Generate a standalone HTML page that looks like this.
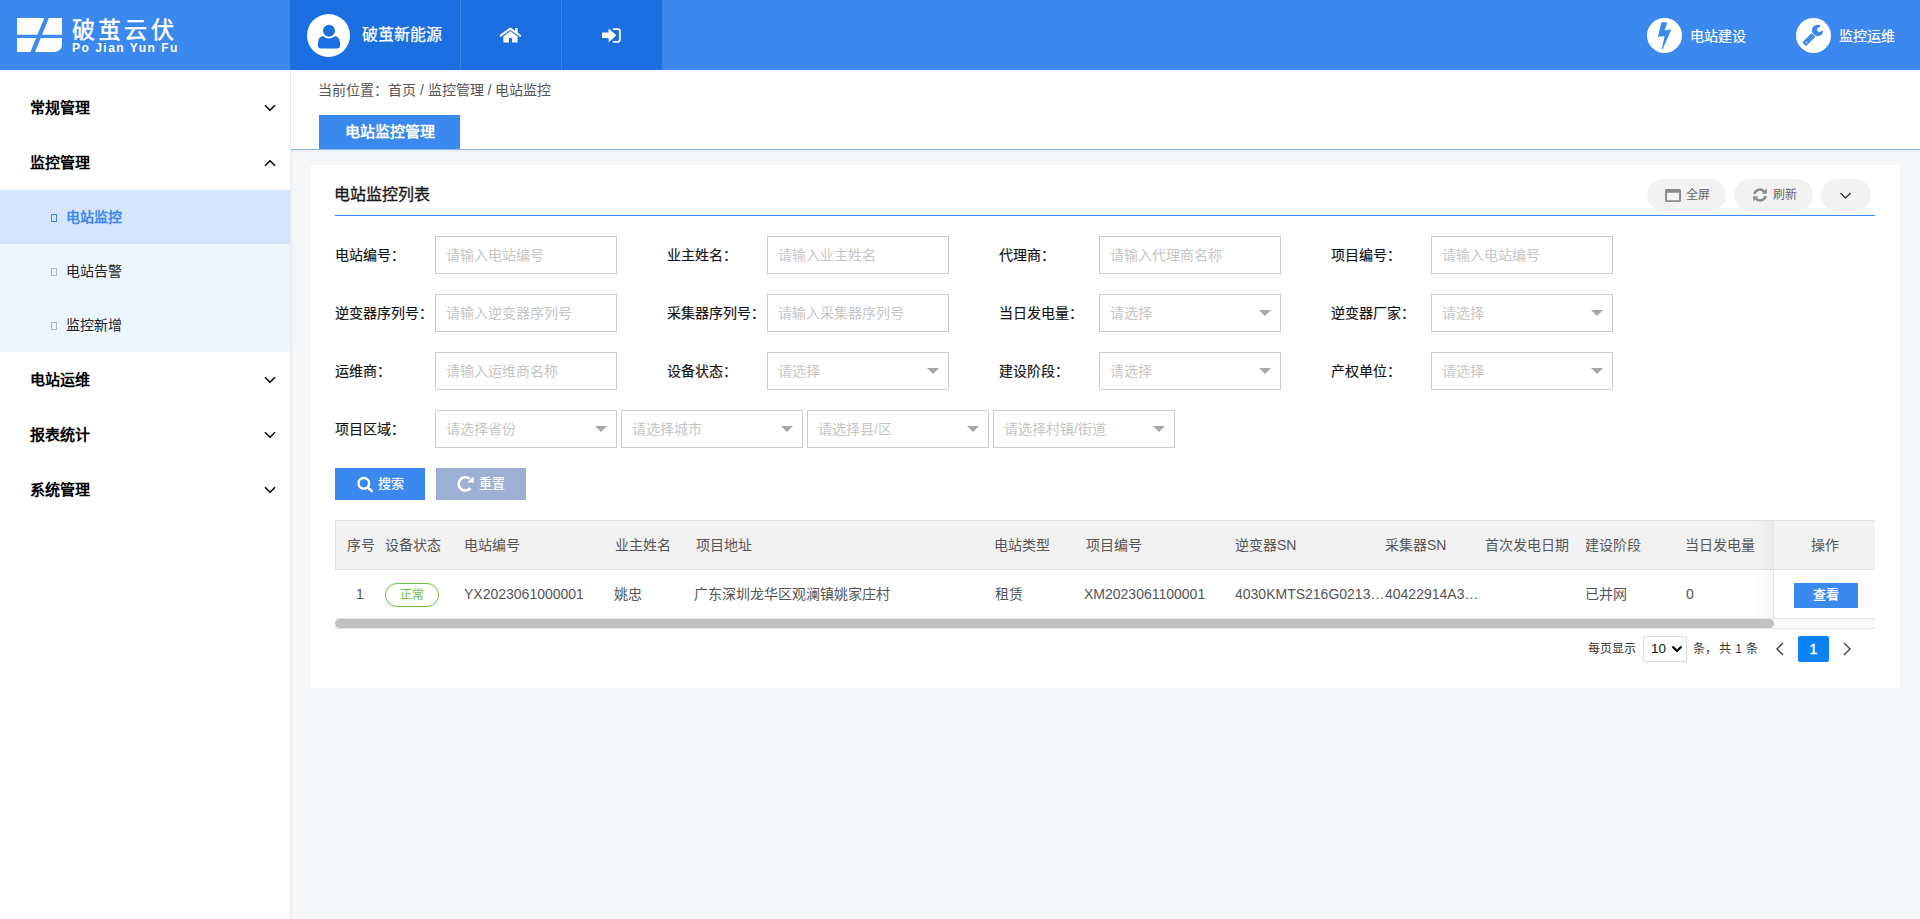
<!DOCTYPE html>
<html lang="zh-CN">
<head>
<meta charset="utf-8">
<title>破茧云伏</title>
<style>
*{box-sizing:border-box;margin:0;padding:0}
html,body{width:1920px;height:919px;overflow:hidden}
body{font-family:"Liberation Sans",sans-serif;background:#f4f6f8;position:relative;color:#333}
.a{position:absolute}
.t{position:absolute;white-space:nowrap}
/* header */
#hdr{left:0;top:0;width:1920px;height:70px;background:#3b88ef}
#hdark{left:290px;top:0;width:372px;height:70px;background:#1c6fe0}
.vdiv{position:absolute;top:0;width:1px;height:70px;background:#3a82e6}
/* sidebar */
#side{left:0;top:70px;width:291px;height:849px;background:#fff;border-right:1px solid #ebebeb;box-shadow:1px 0 3px rgba(0,0,0,0.03)}
.mi{position:absolute;left:30px;font-size:15px;font-weight:bold;color:#000;line-height:20px}
.chev{position:absolute;left:264px}
.sub{position:absolute;left:66px;font-size:14px;color:#222;line-height:20px}
.bul{position:absolute;left:51px;width:6px;height:8px;border:1px solid #b8b8b8}
/* main */
#topw{left:291px;top:70px;width:1629px;height:79px;background:#fff}
#bline{left:291px;top:149px;width:1629px;height:1px;background:#8cbaf3}
#card{left:310px;top:165px;width:1590px;height:523px;background:#fff;border-radius:4px}
.lbl{position:absolute;font-size:14px;color:#111;line-height:20px;-webkit-text-stroke:0.15px #111}
.inp{position:absolute;width:182px;height:38px;border:1px solid #cdcdcd;background:#fff}
.ph{position:absolute;left:10px;top:8px;font-size:14px;color:#c6c6c6;line-height:20px;white-space:nowrap}
.tri{position:absolute;right:9px;top:15px;width:0;height:0;border-left:6px solid transparent;border-right:6px solid transparent;border-top:6px solid #a8a8a8}
.th{position:absolute;top:535px;font-size:14px;color:#555;line-height:20px;white-space:nowrap}
.td{position:absolute;top:584px;font-size:14px;color:#555;line-height:20px;white-space:nowrap}
</style>
</head>
<body>
<!-- HEADER -->
<div id="hdr" class="a"></div>
<div id="hdark" class="a"></div>
<div class="vdiv" style="left:460px"></div>
<div class="vdiv" style="left:561px"></div>
<svg class="a" style="left:0;top:0" width="70" height="70" viewBox="0 0 70 70">
<path fill="#fff" d="M17,18H44.3L37.4,34.8H17Z M48.9,18H62V34.8H42Z M17,38H36.1L30.4,52H17Z M40.7,38H62V44.7A7.3,7.3 0 0 1 54.7,52H35Z"/>
</svg>
<div class="t" style="left:72px;top:14.5px;font-size:23px;line-height:30px;color:#fff;letter-spacing:3.2px;-webkit-text-stroke:0.5px #fff">破茧云伏</div>
<div class="t" style="left:72px;top:40.5px;font-size:12px;line-height:14px;color:#fff;letter-spacing:1.5px;font-weight:bold">Po Jian Yun Fu</div>
<svg class="a" style="left:307px;top:14px" width="43" height="43" viewBox="0 0 43 43">
<circle cx="21.5" cy="21.5" r="21.5" fill="#fff"/>
<path fill="#1c6fe0" d="M15.5,22.2H28.5C31.5,22.2 33,26 33,29.5V31.5A3,3 0 0 1 30,34.5H14A3,3 0 0 1 11,31.5V29.5C11,26 12.5,22.2 15.5,22.2Z"/>
<circle cx="22" cy="16.8" r="7.6" fill="#fff"/>
<circle cx="22" cy="16.8" r="6" fill="#1c6fe0"/>
</svg>
<div class="t" style="left:362px;top:24px;font-size:16px;line-height:22px;color:#fff;-webkit-text-stroke:0.25px #fff">破茧新能源</div>
<svg class="a" style="left:495px;top:20px" width="30" height="30" viewBox="0 0 30 30">
<path fill="#fff" d="M8.4,16.6L15.3,11.1L22.6,16.6V22.5H17.1V18.1H14V22.5H8.4Z"/>
<path fill="none" stroke="#fff" stroke-width="2" stroke-linecap="round" stroke-linejoin="round" d="M5.6,15.6L15.3,8.6L25.1,15.8"/>
<path fill="#fff" d="M20,8H22.6V13.2L20,11.3Z"/>
</svg>
<svg class="a" style="left:596px;top:20px" width="30" height="30" viewBox="0 0 30 30">
<path fill="#fff" d="M6,12.6H12.6V8.5L20.4,15.3L12.6,22.5V18.1H6Z"/>
<path fill="none" stroke="#fff" stroke-width="1.8" stroke-linecap="round" d="M17.6,9.1H21.7A2.2,2.2 0 0 1 23.9,11.3V19.6A2.2,2.2 0 0 1 21.7,21.8H17.6"/>
</svg>
<svg class="a" style="left:1647px;top:18px" width="35" height="35" viewBox="0 0 35 35">
<circle cx="17.5" cy="17.5" r="17.5" fill="#fff"/>
<path fill="#3b88ef" d="M14.4,4.2L20.3,4.4L17.6,12.5L24.4,11.2L15.8,31L14.9,30.9L17.6,18L11,18.9Z"/>
</svg>
<div class="t" style="left:1690px;top:26px;font-size:14px;line-height:20px;color:#fff;-webkit-text-stroke:0.2px #fff">电站建设</div>
<svg class="a" style="left:1796px;top:18px" width="35" height="35" viewBox="0 0 35 35">
<circle cx="17.5" cy="17.5" r="17.5" fill="#fff"/>
<circle cx="21.7" cy="12.35" r="5.7" fill="#3b88ef"/>
<circle cx="23.4" cy="11.6" r="2.4" fill="#fff"/>
<path fill="#fff" d="M23.4,11.6L24.6,6.6L29,5.5L30.5,12L27.2,13.6Z"/>
<path fill="#3b88ef" stroke="#3b88ef" stroke-width="0.8" stroke-linejoin="round" d="M15.5,15.65L18.8,18.85L10.1,27.7L6.7,24.45Z"/>
<rect x="9.9" y="23.9" width="1.4" height="1.4" fill="#fff" transform="rotate(45 10.6 24.6)"/>
</svg>
<div class="t" style="left:1839px;top:26px;font-size:14px;line-height:20px;color:#fff;-webkit-text-stroke:0.2px #fff">监控运维</div>

<!-- SIDEBAR -->
<div id="side" class="a"></div>
<div class="a" style="left:0;top:190px;width:290px;height:54px;background:#d5e6fc"></div>
<div class="a" style="left:0;top:244px;width:290px;height:108px;background:#edf5fe;border-radius:0 0 2px 2px"></div>
<div class="mi" style="top:98px">常规管理</div>
<svg class="chev" style="top:102px" width="12" height="12" viewBox="0 0 12 12"><path fill="none" stroke="#000" stroke-width="1.5" d="M1,3.2L6,8.2L11,3.2"/></svg>
<div class="mi" style="top:153px">监控管理</div>
<svg class="chev" style="top:157px" width="12" height="12" viewBox="0 0 12 12"><path fill="none" stroke="#000" stroke-width="1.5" d="M1,8.8L6,3.8L11,8.8"/></svg>
<div class="bul" style="top:214px;border-color:#3b88ef"></div>
<div class="sub" style="top:207px;color:#3b88ef;font-weight:bold">电站监控</div>
<div class="bul" style="top:268px"></div>
<div class="sub" style="top:261px">电站告警</div>
<div class="bul" style="top:322px"></div>
<div class="sub" style="top:315px">监控新增</div>
<div class="mi" style="top:370px">电站运维</div>
<svg class="chev" style="top:374px" width="12" height="12" viewBox="0 0 12 12"><path fill="none" stroke="#000" stroke-width="1.5" d="M1,3.2L6,8.2L11,3.2"/></svg>
<div class="mi" style="top:425px">报表统计</div>
<svg class="chev" style="top:429px" width="12" height="12" viewBox="0 0 12 12"><path fill="none" stroke="#000" stroke-width="1.5" d="M1,3.2L6,8.2L11,3.2"/></svg>
<div class="mi" style="top:480px">系统管理</div>
<svg class="chev" style="top:484px" width="12" height="12" viewBox="0 0 12 12"><path fill="none" stroke="#000" stroke-width="1.5" d="M1,3.2L6,8.2L11,3.2"/></svg>

<!-- MAIN TOP -->
<div id="topw" class="a"></div>
<div id="bline" class="a"></div>
<div class="a" style="left:291px;top:150px;width:1629px;height:3px;background:linear-gradient(rgba(0,0,0,0.05),rgba(0,0,0,0))"></div>
<div id="card" class="a"></div>
<div class="t" style="left:318px;top:80px;font-size:14px;line-height:20px;color:#555">当前位置：首页 / 监控管理 / 电站监控</div>
<div class="a" style="left:319px;top:115px;width:141px;height:34px;background:#3b88ef"></div>
<div class="t" style="left:319px;top:121px;width:141px;text-align:center;font-size:15px;line-height:22px;color:#fff;font-weight:bold">电站监控管理</div>
<div class="t" style="left:334px;top:184px;font-size:16px;line-height:22px;color:#1a1a1a;-webkit-text-stroke:0.35px #1a1a1a">电站监控列表</div>
<div class="a" style="left:335px;top:215px;width:1540px;height:1px;background:#3b88ef"></div>
<!-- toolbar pills -->
<div class="a" style="left:1647px;top:179px;width:79px;height:32px;border-radius:16px;background:#f2f2f2"></div>
<svg class="a" style="left:1665px;top:189px" width="16" height="13" viewBox="0 0 16 13"><path fill="#8c8c8c" fill-rule="evenodd" d="M1.5,0H14.5A1.5,1.5 0 0 1 16,1.5V11.5A1.5,1.5 0 0 1 14.5,13H1.5A1.5,1.5 0 0 1 0,11.5V1.5A1.5,1.5 0 0 1 1.5,0Z M2,3.7V11.2H14V3.7Z"/></svg>
<div class="t" style="left:1686px;top:186px;font-size:12px;line-height:18px;color:#666">全屏</div>
<div class="a" style="left:1734px;top:179px;width:79px;height:32px;border-radius:16px;background:#f2f2f2"></div>
<svg class="a" style="left:1753px;top:188px" width="14" height="14" viewBox="0 0 14 14">
<path fill="none" stroke="#8c8c8c" stroke-width="2.6" d="M1.4,6.1A5.7,5.7 0 0 1 11.4,3.7"/>
<path fill="#8c8c8c" d="M8.8,5.8L13.9,5.8L13.9,0.4Z"/>
<path fill="none" stroke="#8c8c8c" stroke-width="2.6" d="M12.6,7.9A5.7,5.7 0 0 1 2.6,10.3"/>
<path fill="#8c8c8c" d="M5.2,8.2L0.1,8.2L0.1,13.6Z"/>
</svg>
<div class="t" style="left:1773px;top:186px;font-size:12px;line-height:18px;color:#666">刷新</div>
<div class="a" style="left:1821px;top:179px;width:50px;height:32px;border-radius:16px;background:#f2f2f2"></div>
<svg class="a" style="left:1840px;top:190px" width="11" height="11" viewBox="0 0 11 11"><path fill="none" stroke="#333" stroke-width="1.3" d="M0.5,3L5.5,8L10.5,3"/></svg>

<!-- FORM -->
<div class="lbl" style="left:335px;top:245px">电站编号：</div>
<div class="inp" style="left:435px;top:236px"><div class="ph">请输入电站编号</div></div>
<div class="lbl" style="left:667px;top:245px">业主姓名：</div>
<div class="inp" style="left:767px;top:236px"><div class="ph">请输入业主姓名</div></div>
<div class="lbl" style="left:999px;top:245px">代理商：</div>
<div class="inp" style="left:1099px;top:236px"><div class="ph">请输入代理商名称</div></div>
<div class="lbl" style="left:1331px;top:245px">项目编号：</div>
<div class="inp" style="left:1431px;top:236px"><div class="ph">请输入电站编号</div></div>
<div class="lbl" style="left:335px;top:303px">逆变器序列号：</div>
<div class="inp" style="left:435px;top:294px"><div class="ph">请输入逆变器序列号</div></div>
<div class="lbl" style="left:667px;top:303px">采集器序列号：</div>
<div class="inp" style="left:767px;top:294px"><div class="ph">请输入采集器序列号</div></div>
<div class="lbl" style="left:999px;top:303px">当日发电量：</div>
<div class="inp" style="left:1099px;top:294px"><div class="ph">请选择</div><div class="tri"></div></div>
<div class="lbl" style="left:1331px;top:303px">逆变器厂家：</div>
<div class="inp" style="left:1431px;top:294px"><div class="ph">请选择</div><div class="tri"></div></div>
<div class="lbl" style="left:335px;top:361px">运维商：</div>
<div class="inp" style="left:435px;top:352px"><div class="ph">请输入运维商名称</div></div>
<div class="lbl" style="left:667px;top:361px">设备状态：</div>
<div class="inp" style="left:767px;top:352px"><div class="ph">请选择</div><div class="tri"></div></div>
<div class="lbl" style="left:999px;top:361px">建设阶段：</div>
<div class="inp" style="left:1099px;top:352px"><div class="ph">请选择</div><div class="tri"></div></div>
<div class="lbl" style="left:1331px;top:361px">产权单位：</div>
<div class="inp" style="left:1431px;top:352px"><div class="ph">请选择</div><div class="tri"></div></div>
<div class="lbl" style="left:335px;top:419px">项目区域：</div>
<div class="inp" style="left:435px;top:410px"><div class="ph">请选择省份</div><div class="tri"></div></div>
<div class="inp" style="left:621px;top:410px"><div class="ph">请选择城市</div><div class="tri"></div></div>
<div class="inp" style="left:807px;top:410px"><div class="ph">请选择县/区</div><div class="tri"></div></div>
<div class="inp" style="left:993px;top:410px"><div class="ph">请选择村镇/街道</div><div class="tri"></div></div>
<!-- BUTTONS -->
<div class="a" style="left:335px;top:468px;width:90px;height:32px;background:#3b88ef"></div>
<svg class="a" style="left:355px;top:475px" width="20" height="20" viewBox="0 0 20 20"><circle cx="8.8" cy="8.3" r="5.3" fill="none" stroke="#fff" stroke-width="2.4"/><path stroke="#fff" stroke-width="2.6" stroke-linecap="round" d="M13,12.6L16.8,16"/></svg>
<div class="t" style="left:378px;top:473.5px;font-size:13px;line-height:20px;color:#fff;-webkit-text-stroke:0.2px #fff">搜索</div>
<div class="a" style="left:436px;top:468px;width:90px;height:32px;background:#9db0d3"></div>
<svg class="a" style="left:455px;top:474px" width="20" height="20" viewBox="0 0 20 20"><path fill="none" stroke="#fff" stroke-width="2.7" d="M15.39,14.17A6.65,6.65 0 1 1 14.57,4.81"/><path fill="#fff" d="M18.6,2.4L12.2,8.5H18.8Z"/></svg>
<div class="t" style="left:479px;top:473.5px;font-size:13px;line-height:20px;color:#fff;-webkit-text-stroke:0.2px #fff">重置</div>
<!-- TABLE -->
<div class="a" style="left:335px;top:520px;width:1540px;height:50px;background:#f2f2f2;border:1px solid #e2e2e2;border-right:none"></div>
<div class="a" style="left:335px;top:618px;width:1540px;height:1px;background:#e6e6e6"></div>
<div class="a" style="left:335px;top:619px;width:1540px;height:9px;background:#fafafa"></div>
<div class="a" style="left:335px;top:628px;width:1540px;height:1px;background:#e6e6e6"></div>
<div class="a" style="left:335px;top:619px;width:1439px;height:9px;background:#c1c1c1;border-radius:4.5px"></div>
<div class="a" style="left:1755px;top:521px;width:18px;height:97px;background:linear-gradient(to right,rgba(0,0,0,0),rgba(0,0,0,0.03))"></div>
<div class="a" style="left:1773px;top:520px;width:1px;height:98px;background:#e2e2e2"></div>

<div class="th" style="left:347px">序号</div>
<div class="th" style="left:385px">设备状态</div>
<div class="th" style="left:464px">电站编号</div>
<div class="th" style="left:615px">业主姓名</div>
<div class="th" style="left:696px">项目地址</div>
<div class="th" style="left:994px">电站类型</div>
<div class="th" style="left:1086px">项目编号</div>
<div class="th" style="left:1235px">逆变器SN</div>
<div class="th" style="left:1385px">采集器SN</div>
<div class="th" style="left:1485px">首次发电日期</div>
<div class="th" style="left:1585px">建设阶段</div>
<div class="th" style="left:1685px">当日发电量</div>
<div class="th" style="left:1774px;width:101px;text-align:center">操作</div>
<div class="td" style="left:356px">1</div>
<div class="td" style="left:464px">YX2023061000001</div>
<div class="td" style="left:614px">姚忠</div>
<div class="td" style="left:694px">广东深圳龙华区观澜镇姚家庄村</div>
<div class="td" style="left:995px">租赁</div>
<div class="td" style="left:1084px">XM2023061100001</div>
<div class="td" style="left:1235px">4030KMTS216G0213…</div>
<div class="td" style="left:1385px">40422914A3…</div>
<div class="td" style="left:1585px">已并网</div>
<div class="td" style="left:1686px">0</div>
<div class="a" style="left:385px;top:583px;width:54px;height:24px;border:1px solid #67c23a;border-radius:12px"></div>
<div class="t" style="left:385px;top:585px;width:54px;text-align:center;font-size:12px;line-height:20px;color:#67c23a">正常</div>
<div class="a" style="left:1794px;top:583px;width:64px;height:25px;background:#3b88ef"></div>
<div class="t" style="left:1794px;top:585px;width:64px;text-align:center;font-size:13px;line-height:20px;color:#fff;-webkit-text-stroke:0.3px #fff">查看</div>
<!-- PAGINATION -->
<div class="t" style="left:1588px;top:640px;font-size:12px;line-height:18px;color:#333">每页显示</div>
<div class="a" style="left:1643px;top:636px;width:44px;height:26px;border:1px solid #dcdcdc;border-radius:2px;background:#fff"></div>
<div class="t" style="left:1651px;top:640px;font-size:13.5px;line-height:18px;color:#111">10</div>
<svg class="a" style="left:1671px;top:644px" width="12" height="10" viewBox="0 0 12 10"><path fill="none" stroke="#000" stroke-width="2.2" d="M1.5,2.5L6,7L10.5,2.5"/></svg>
<div class="t" style="left:1693px;top:640px;font-size:12px;line-height:18px;color:#333">条，</div>
<div class="t" style="left:1719px;top:640px;font-size:12px;line-height:18px;color:#333;word-spacing:1px">共 1 条</div>
<svg class="a" style="left:1774px;top:642px" width="12" height="14" viewBox="0 0 12 14"><path fill="none" stroke="#444" stroke-width="1.4" d="M9,1L3,7L9,13"/></svg>
<div class="a" style="left:1798px;top:636px;width:31px;height:26px;background:#0a82f4;border-radius:2px"></div>
<div class="t" style="left:1798px;top:640px;width:31px;text-align:center;font-size:14px;line-height:18px;color:#fff;-webkit-text-stroke:0.5px #fff">1</div>
<svg class="a" style="left:1841px;top:642px" width="12" height="14" viewBox="0 0 12 14"><path fill="none" stroke="#444" stroke-width="1.4" d="M3,1L9,7L3,13"/></svg>
</body>
</html>
